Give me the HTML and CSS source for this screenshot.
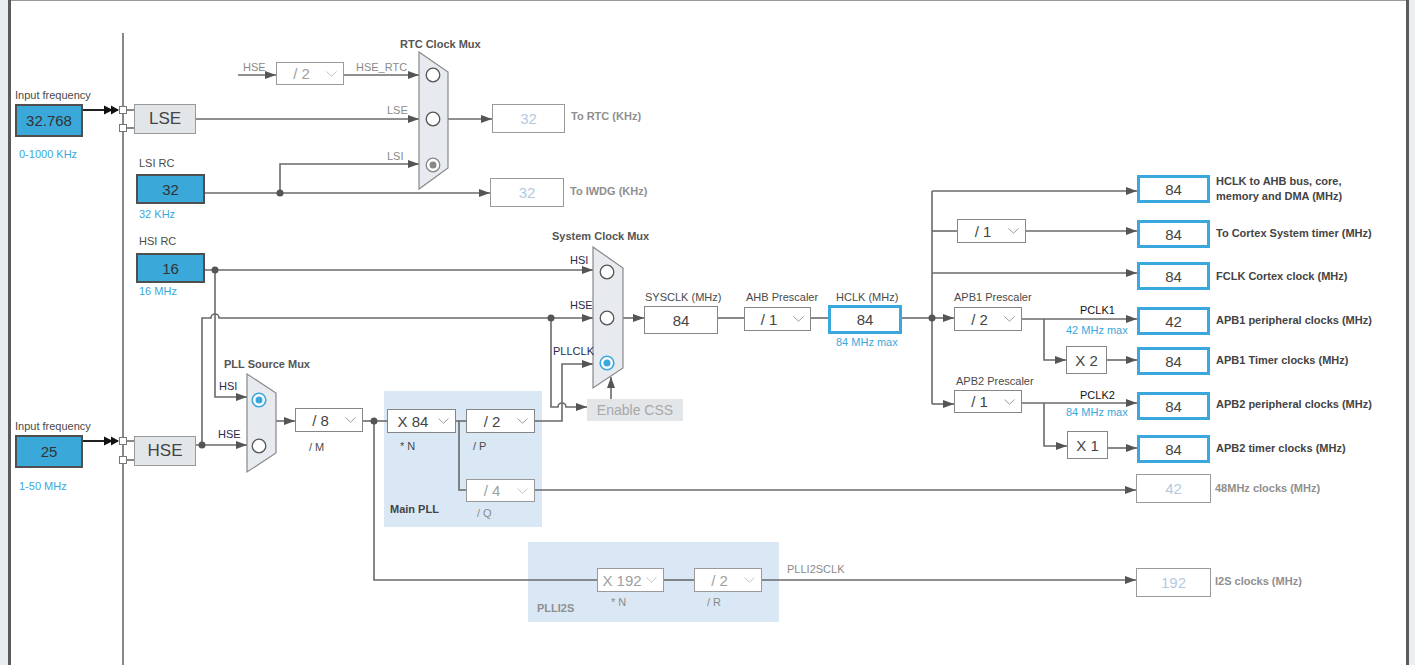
FILE: index.html
```html
<!DOCTYPE html>
<html>
<head>
<meta charset="utf-8">
<title>Clock Configuration</title>
<link rel="stylesheet" href="styles.css">
</head>
<body>
<div class="screen">
  <div class="gutter-left"></div>
  <div class="frame-left"></div>
  <div class="frame-top"></div>
  <div class="frame-right"></div>
  <div class="gutter-right"></div>

  <div class="region r-pll"></div>
  <div class="region r-i2s"></div>

  <svg class="wires" width="1422" height="665" viewBox="0 0 1422 665">
    <defs>
      <marker id="ar" markerWidth="11" markerHeight="8" refX="11" refY="4" orient="auto" markerUnits="userSpaceOnUse">
        <path d="M0,0 L11,4 L0,8 z" fill="#555"/>
      </marker>
    </defs>
    <g class="w">
      <path d="M123,33 V665"/>
      <path d="M196,119 H419" marker-end="url(#ar)"/>
      <path d="M238,75 H276" marker-end="url(#ar)"/>
      <path d="M344,75 H419" marker-end="url(#ar)"/>
      <path d="M205,193 H490" marker-end="url(#ar)"/>
      <path d="M280,193 V164 H419" marker-end="url(#ar)"/>
      <path d="M448,119 H492" marker-end="url(#ar)"/>
      <path d="M205,270 H593" marker-end="url(#ar)"/>
      <path d="M215,270 V397 H247" marker-end="url(#ar)"/>
      <path d="M196,445 H247" marker-end="url(#ar)"/>
      <path d="M202,445 V318 H211 a4,4 0 0 1 8,0 H593" marker-end="url(#ar)"/>
      <path d="M551,318 V407 H558 a4,4 0 0 1 8,0 H587" marker-end="url(#ar)"/>
      <path d="M276,421 H295" marker-end="url(#ar)"/>
      <path d="M363,421 H387"/>
      <path d="M374,421 V580 H597"/>
      <path d="M456,421 H466"/>
      <path d="M459,421 V490 H466"/>
      <path d="M535,421 H562 V364 H593" marker-end="url(#ar)"/>
      <path d="M535,490 H1136" marker-end="url(#ar)"/>
      <path d="M664,580 H694"/>
      <path d="M762,580 H1136" marker-end="url(#ar)"/>
      <path d="M611,399 V377" marker-end="url(#ar)"/>
      <path d="M623,318 H644" marker-end="url(#ar)"/>
      <path d="M718,318 H744"/>
      <path d="M811,318 H828"/>
      <path d="M902,318 H932"/>
      <path d="M932,191 V404"/>
      <path d="M932,191 H1137" marker-end="url(#ar)"/>
      <path d="M932,231 H957"/>
      <path d="M1026,231 H1137" marker-end="url(#ar)"/>
      <path d="M932,273 H1137" marker-end="url(#ar)"/>
      <path d="M932,318 H954" marker-end="url(#ar)"/>
      <path d="M1022,319 H1137" marker-end="url(#ar)"/>
      <path d="M1044,319 V360 H1066" marker-end="url(#ar)"/>
      <path d="M1107,360 H1137" marker-end="url(#ar)"/>
      <path d="M932,404 H954" marker-end="url(#ar)"/>
      <path d="M1022,403 H1137" marker-end="url(#ar)"/>
      <path d="M1044,403 V446 H1067" marker-end="url(#ar)"/>
      <path d="M1108,448 H1137" marker-end="url(#ar)"/>
      <path d="M126,110 H134"/>
      <path d="M126,128 H134"/>
      <path d="M126,441 H134"/>
      <path d="M126,460 H134"/>
    </g>
    <g class="dots">
      <circle cx="280" cy="193" r="3.5"/>
      <circle cx="215" cy="270" r="3.5"/>
      <circle cx="202" cy="445" r="3.5"/>
      <circle cx="551" cy="318" r="3.5"/>
      <circle cx="374" cy="421" r="3.5"/>
      <circle cx="932" cy="318" r="3.5"/>
    </g>
    <g class="inarrow">
      <path d="M83,110 H118" class="thick"/>
      <path d="M104,105.5 L113,110 L104,114.5 z"/>
      <path d="M111,105.5 L119,110 L111,114.5 z"/>
      <path d="M83,441 H118" class="thick"/>
      <path d="M104,436.5 L113,441 L104,445.5 z"/>
      <path d="M111,436.5 L119,441 L111,445.5 z"/>
    </g>
    <g class="pins">
      <rect x="119.5" y="106.5" width="7" height="7"/>
      <rect x="119.5" y="124.5" width="7" height="7"/>
      <rect x="119.5" y="437.5" width="7" height="7"/>
      <rect x="119.5" y="456.5" width="7" height="7"/>
    </g>
    <g class="mux">
      <polygon points="419,52 448,72 448,168 419,189"/>
      <polygon points="593,247 623,268 623,368 593,388"/>
      <polygon points="247,374 276,393 276,453 247,472"/>
    </g>
    <g class="radio">
      <circle cx="433" cy="75" r="6.8"/>
      <circle cx="433" cy="119" r="6.8"/>
      <circle cx="433" cy="165" r="6.8" class="gray"/>
      <circle cx="607" cy="272" r="6.8"/>
      <circle cx="607" cy="318" r="6.8"/>
      <circle cx="607" cy="363" r="6.8" class="blue"/>
      <circle cx="259" cy="400" r="6.8" class="blue"/>
      <circle cx="259" cy="446" r="6.8"/>
    </g>
    <g class="radio-dot">
      <circle cx="433" cy="165" r="3.5" class="gray"/>
      <circle cx="607" cy="363" r="3.5"/>
      <circle cx="259" cy="400" r="3.5"/>
    </g>
  </svg>

  <!-- labels -->
  <div class="lbl l-inf1">Input frequency</div>
  <div class="lbl blue l-r1">0-1000 KHz</div>
  <div class="lbl l-lsirc">LSI RC</div>
  <div class="lbl blue l-32k">32 KHz</div>
  <div class="lbl l-hsirc">HSI RC</div>
  <div class="lbl blue l-16m">16 MHz</div>
  <div class="lbl l-inf2">Input frequency</div>
  <div class="lbl blue l-r2">1-50 MHz</div>

  <div class="lbl title l-rtcmux">RTC Clock Mux</div>
  <div class="lbl grey l-rhse">HSE</div>
  <div class="lbl grey l-hsertc">HSE_RTC</div>
  <div class="lbl grey l-rlse">LSE</div>
  <div class="lbl grey l-rlsi">LSI</div>
  <div class="lbl bold dim l-torta">To RTC (KHz)</div>
  <div class="lbl bold dim l-toiwdg">To IWDG (KHz)</div>

  <div class="lbl title l-sysmux">System Clock Mux</div>
  <div class="lbl navy l-shsi">HSI</div>
  <div class="lbl navy l-shse">HSE</div>
  <div class="lbl navy l-spll">PLLCLK</div>

  <div class="lbl title l-pllmux">PLL Source Mux</div>
  <div class="lbl navy l-phsi">HSI</div>
  <div class="lbl navy l-phse">HSE</div>
  <div class="lbl l-m">/ M</div>
  <div class="lbl l-n">* N</div>
  <div class="lbl l-p">/ P</div>
  <div class="lbl grey l-q">/ Q</div>
  <div class="lbl bold l-mainpll">Main PLL</div>

  <div class="lbl l-sysclk">SYSCLK (MHz)</div>
  <div class="lbl l-ahb">AHB Prescaler</div>
  <div class="lbl l-hclk">HCLK (MHz)</div>
  <div class="lbl blue l-hmax">84 MHz max</div>

  <div class="lbl l-apb1">APB1 Prescaler</div>
  <div class="lbl black l-pclk1">PCLK1</div>
  <div class="lbl blue l-p1max">42 MHz max</div>
  <div class="lbl l-apb2">APB2 Prescaler</div>
  <div class="lbl black l-pclk2">PCLK2</div>
  <div class="lbl blue l-p2max">84 MHz max</div>

  <div class="lbl bold l-o1">HCLK to AHB bus, core,<br>memory and DMA (MHz)</div>
  <div class="lbl bold l-o2">To Cortex System timer (MHz)</div>
  <div class="lbl bold l-o3">FCLK Cortex clock (MHz)</div>
  <div class="lbl bold l-o4">APB1 peripheral clocks (MHz)</div>
  <div class="lbl bold l-o5">APB1 Timer clocks (MHz)</div>
  <div class="lbl bold l-o6">APB2 peripheral clocks (MHz)</div>
  <div class="lbl bold l-o7">APB2 timer clocks (MHz)</div>
  <div class="lbl bold dim l-o48">48MHz clocks (MHz)</div>
  <div class="lbl bold dim l-oi2s">I2S clocks (MHz)</div>

  <div class="lbl grey l-i2sclk">PLLI2SCLK</div>
  <div class="lbl grey l-i2sn">* N</div>
  <div class="lbl grey l-i2sr">/ R</div>
  <div class="lbl bold dim l-i2s">PLLI2S</div>

  <!-- nodes -->
  <div class="node src n-in1">32.768</div>
  <div class="node osc n-lse">LSE</div>
  <div class="node src n-lsi">32</div>
  <div class="node src n-hsi">16</div>
  <div class="node src n-in2">25</div>
  <div class="node osc n-hse">HSE</div>

  <div class="node sel dis n-rtcdiv"><span>/ 2</span><svg class="chev" viewBox="0 0 11 6"><path d="M0.5,0.5 L5.5,5.2 L10.5,0.5"/></svg></div>
  <div class="node val dis n-rtc">32</div>
  <div class="node val dis n-iwdg">32</div>

  <div class="node sel n-m"><span>/ 8</span><svg class="chev" viewBox="0 0 11 6"><path d="M0.5,0.5 L5.5,5.2 L10.5,0.5"/></svg></div>
  <div class="node sel n-n"><span>X 84</span><svg class="chev" viewBox="0 0 11 6"><path d="M0.5,0.5 L5.5,5.2 L10.5,0.5"/></svg></div>
  <div class="node sel n-p"><span>/ 2</span><svg class="chev" viewBox="0 0 11 6"><path d="M0.5,0.5 L5.5,5.2 L10.5,0.5"/></svg></div>
  <div class="node sel dis n-q"><span>/ 4</span><svg class="chev" viewBox="0 0 11 6"><path d="M0.5,0.5 L5.5,5.2 L10.5,0.5"/></svg></div>
  <div class="node css-btn n-css">Enable CSS</div>

  <div class="node val n-sys">84</div>
  <div class="node sel n-ahb"><span>/ 1</span><svg class="chev" viewBox="0 0 11 6"><path d="M0.5,0.5 L5.5,5.2 L10.5,0.5"/></svg></div>
  <div class="node out n-hclk">84</div>

  <div class="node sel n-ctx"><span>/ 1</span><svg class="chev" viewBox="0 0 11 6"><path d="M0.5,0.5 L5.5,5.2 L10.5,0.5"/></svg></div>
  <div class="node sel n-apb1"><span>/ 2</span><svg class="chev" viewBox="0 0 11 6"><path d="M0.5,0.5 L5.5,5.2 L10.5,0.5"/></svg></div>
  <div class="node sel n-apb2"><span>/ 1</span><svg class="chev" viewBox="0 0 11 6"><path d="M0.5,0.5 L5.5,5.2 L10.5,0.5"/></svg></div>
  <div class="node val n-x2">X 2</div>
  <div class="node val n-x1">X 1</div>

  <div class="node out o1">84</div>
  <div class="node out o2">84</div>
  <div class="node out o3">84</div>
  <div class="node out o4">42</div>
  <div class="node out o5">84</div>
  <div class="node out o6">84</div>
  <div class="node out o7">84</div>
  <div class="node val dis n-48">42</div>
  <div class="node val dis n-i2s">192</div>

  <div class="node sel dis n-i2sn"><span>X 192</span><svg class="chev" viewBox="0 0 11 6"><path d="M0.5,0.5 L5.5,5.2 L10.5,0.5"/></svg></div>
  <div class="node sel dis n-i2sr"><span>/ 2</span><svg class="chev" viewBox="0 0 11 6"><path d="M0.5,0.5 L5.5,5.2 L10.5,0.5"/></svg></div>
</div>
</body>
</html>
```

FILE: styles.css
```css
* { box-sizing: border-box; margin: 0; padding: 0; }
body { margin: 0; background: #fff; font-family: "Liberation Sans", Arial, sans-serif; }

.screen { position: relative; width: 1422px; height: 665px; overflow: hidden; background: #fff; }

.gutter-left { position: absolute; left: 0; top: 0; width: 8px; height: 665px; background: #e9ecef; }
.frame-left { position: absolute; left: 8px; top: 0; width: 3px; height: 665px; background: #5b5b5b; }
.frame-top { position: absolute; left: 11px; top: 0; width: 1395px; height: 1px; background: #9a9a9a; }
.frame-right { position: absolute; left: 1406px; top: 0; width: 3px; height: 665px; background: #5b5b5b; }
.gutter-right { position: absolute; left: 1409px; top: 0; width: 6px; height: 665px; background: #eceff2; }

.region { position: absolute; background: #dae8f5; }
.r-pll { left: 384px; top: 391px; width: 158px; height: 136px; }
.r-i2s { left: 528px; top: 542px; width: 251px; height: 80px; }

.wires { position: absolute; left: 0; top: 0; }
.w path { fill: none; stroke: #6a6a6a; stroke-width: 1.6; }
.dots circle { fill: #555; }
.inarrow path { fill: #111; stroke: none; }
.inarrow path.thick { fill: none; stroke: #222; stroke-width: 2; }
.pins rect { fill: #fff; stroke: #777; stroke-width: 1; }
.mux polygon { fill: #e7ebef; stroke: #888; stroke-width: 1.2; }
.radio circle { fill: #fff; stroke: #555; stroke-width: 1.3; }
.radio circle.blue { stroke: #3aa8dc; stroke-width: 1.6; }
.radio circle.gray { stroke: #888; }
.radio-dot circle { fill: #3aa8dc; }
.radio-dot circle.gray { fill: #888; }

/* labels */
.lbl { position: absolute; font-size: 11px; line-height: 12px; white-space: nowrap; color: #4a4a4a; }
.lbl.blue { color: #3aa8dc; }
.lbl.grey { color: #8a8a8a; }
.lbl.navy { color: #1f2a4d; }
.lbl.black { color: #111; }
.lbl.bold { font-weight: bold; color: #444; }
.lbl.title { font-weight: bold; color: #555; }
.lbl.dim { color: #8f8f8f; }

.l-inf1 { left: 15px; top: 89px; }
.l-r1 { left: 19px; top: 148px; }
.l-lsirc { left: 139px; top: 157px; }
.l-32k { left: 139px; top: 208px; }
.l-hsirc { left: 139px; top: 235px; }
.l-16m { left: 139px; top: 285px; }
.l-inf2 { left: 15px; top: 420px; }
.l-r2 { left: 19px; top: 480px; }

.l-rtcmux { left: 400px; top: 38px; }
.l-rhse { left: 243px; top: 61px; }
.l-hsertc { left: 356px; top: 61px; }
.l-rlse { left: 387px; top: 104px; }
.l-rlsi { left: 387px; top: 150px; }
.l-torta { left: 571px; top: 110px; }
.l-toiwdg { left: 570px; top: 185px; }

.l-sysmux { left: 552px; top: 230px; }
.l-shsi { left: 570px; top: 254px; }
.l-shse { left: 570px; top: 299px; }
.l-spll { left: 553px; top: 345px; }

.l-pllmux { left: 224px; top: 358px; }
.l-phsi { left: 219px; top: 380px; }
.l-phse { left: 218px; top: 428px; }
.l-m { left: 309px; top: 441px; }
.l-n { left: 400px; top: 440px; }
.l-p { left: 473px; top: 440px; }
.l-q { left: 477px; top: 507px; }
.l-mainpll { left: 390px; top: 503px; }

.l-sysclk { left: 645px; top: 291px; }
.l-ahb { left: 746px; top: 291px; }
.l-hclk { left: 836px; top: 291px; }
.l-hmax { left: 836px; top: 336px; }

.l-apb1 { left: 954px; top: 291px; }
.l-pclk1 { left: 1080px; top: 304px; }
.l-p1max { left: 1066px; top: 324px; }
.l-apb2 { left: 956px; top: 375px; }
.l-pclk2 { left: 1080px; top: 389px; }
.l-p2max { left: 1066px; top: 406px; }

.l-o1 { left: 1216px; top: 174px; line-height: 15px; }
.l-o2 { left: 1216px; top: 227px; }
.l-o3 { left: 1216px; top: 270px; }
.l-o4 { left: 1216px; top: 314px; }
.l-o5 { left: 1216px; top: 354px; }
.l-o6 { left: 1216px; top: 398px; }
.l-o7 { left: 1216px; top: 442px; }
.l-o48 { left: 1215px; top: 482px; }
.l-oi2s { left: 1215px; top: 575px; }

.l-i2sclk { left: 787px; top: 563px; }
.l-i2sn { left: 611px; top: 596px; }
.l-i2sr { left: 707px; top: 596px; }
.l-i2s { left: 537px; top: 602px; }

/* nodes */
.node { position: absolute; display: flex; align-items: center; justify-content: center; white-space: nowrap; }
.src { background: #3ba8da; border: 2px solid #4f4f4f; color: #333; font-size: 15px; }
.osc { background: #e3e6e9; border: 1px solid #999; color: #444; font-size: 17px; }
.val { background: #fff; border: 1px solid #868686; color: #444; font-size: 15px; }
.val.dis { border-color: #9a9a9a; color: #b3c9df; }
.out { background: #fff; border: 3px solid #3aa8dc; color: #444; font-size: 15px; }
.sel { background: #fff; border: 1px solid #868686; color: #444; font-size: 15px; }
.sel span { flex: 1; text-align: center; }
.sel.dis { border-color: #9a9a9a; color: #a0a0a0; }
.chev { width: 11px; height: 6px; margin-right: 6px; flex: none; }
.chev path { fill: none; stroke: #9a9a9a; stroke-width: 1; }
.sel.dis .chev path { stroke: #c4c4c4; }
.css-btn { background: #e3e6e9; color: #a8a8a8; font-size: 14px; }

.n-in1 { left: 15px; top: 104px; width: 68px; height: 33px; }
.n-lse { left: 134px; top: 104px; width: 62px; height: 30px; }
.n-lsi { left: 136px; top: 174px; width: 69px; height: 30px; }
.n-hsi { left: 136px; top: 253px; width: 69px; height: 30px; }
.n-in2 { left: 15px; top: 435px; width: 68px; height: 33px; }
.n-hse { left: 134px; top: 436px; width: 62px; height: 30px; }
.n-rtcdiv { left: 276px; top: 62px; width: 68px; height: 23px; }
.n-rtc { left: 492px; top: 104px; width: 73px; height: 29px; }
.n-iwdg { left: 490px; top: 178px; width: 74px; height: 29px; }
.n-m { left: 295px; top: 408px; width: 68px; height: 24px; }
.n-n { left: 387px; top: 409px; width: 69px; height: 24px; }
.n-p { left: 466px; top: 409px; width: 69px; height: 24px; }
.n-q { left: 466px; top: 479px; width: 69px; height: 23px; }
.n-css { left: 587px; top: 399px; width: 96px; height: 22px; }
.n-sys { left: 644px; top: 306px; width: 74px; height: 28px; }
.n-ahb { left: 744px; top: 307px; width: 67px; height: 24px; }
.n-hclk { left: 828px; top: 305px; width: 74px; height: 29px; }
.n-ctx { left: 957px; top: 219px; width: 69px; height: 24px; }
.n-apb1 { left: 954px; top: 307px; width: 68px; height: 24px; }
.n-apb2 { left: 954px; top: 390px; width: 68px; height: 23px; }
.n-x2 { left: 1066px; top: 346px; width: 41px; height: 28px; }
.n-x1 { left: 1067px; top: 431px; width: 41px; height: 28px; }
.o1, .o2, .o3, .o4, .o5, .o6, .o7 { left: 1137px; width: 73px; height: 28px; }
.o1 { top: 175px; }
.o2 { top: 220px; }
.o3 { top: 262px; }
.o4 { top: 307px; }
.o5 { top: 347px; }
.o6 { top: 392px; }
.o7 { top: 435px; }
.n-48 { left: 1136px; top: 474px; width: 75px; height: 29px; }
.n-i2s { left: 1136px; top: 568px; width: 75px; height: 29px; }
.n-i2sn { left: 597px; top: 568px; width: 67px; height: 24px; }
.n-i2sr { left: 694px; top: 568px; width: 68px; height: 24px; }
```
